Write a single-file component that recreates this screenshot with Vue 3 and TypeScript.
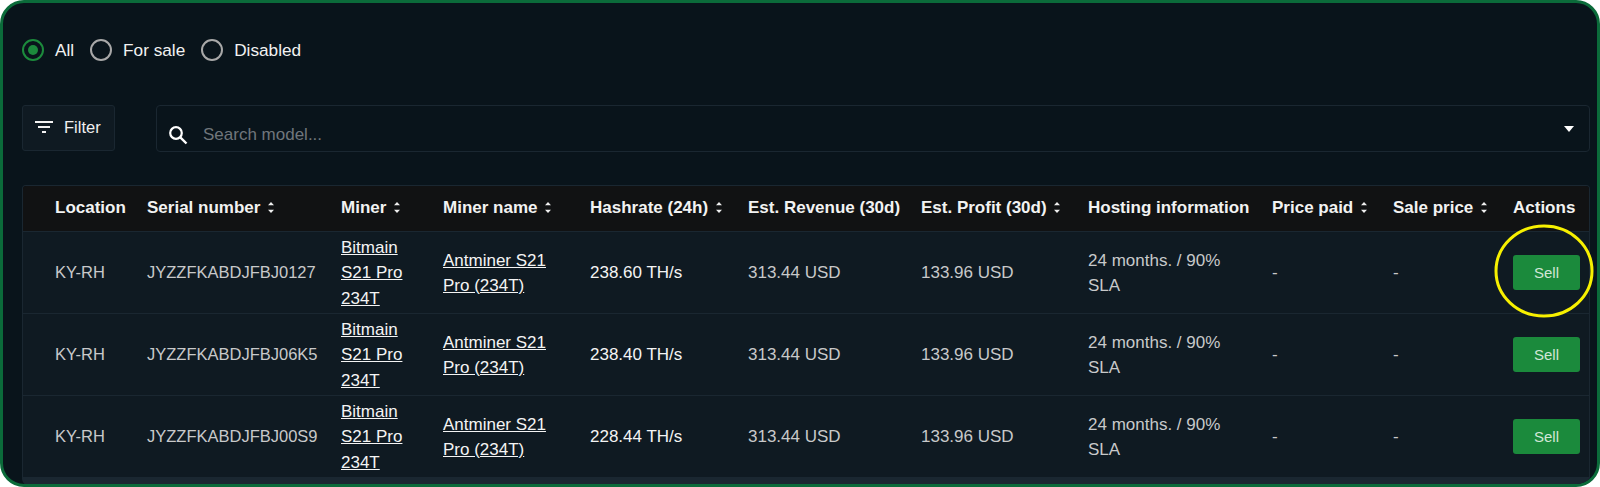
<script setup lang="ts">
interface Row { serial: string; hash: string }
const rows: Row[] = [
  { serial: 'JYZZFKABDJFBJ0127', hash: '238.60 TH/s' },
  { serial: 'JYZZFKABDJFBJ06K5', hash: '238.40 TH/s' },
  { serial: 'JYZZFKABDJFBJ00S9', hash: '228.44 TH/s' },
]
const columns = [
  { label: 'Location', sort: false, width: 124 },
  { label: 'Serial number', sort: true, width: 194 },
  { label: 'Miner', sort: true, width: 102 },
  { label: 'Miner name', sort: true, width: 147 },
  { label: 'Hashrate (24h)', sort: true, width: 158 },
  { label: 'Est. Revenue (30d)', sort: false, width: 173 },
  { label: 'Est. Profit (30d)', sort: true, width: 167 },
  { label: 'Hosting information', sort: false, width: 184 },
  { label: 'Price paid', sort: true, width: 121 },
  { label: 'Sale price', sort: true, width: 120 },
  { label: 'Actions', sort: false, width: 77 },
]
const filters = [
  { label: 'All', on: true },
  { label: 'For sale', on: false },
  { label: 'Disabled', on: false },
]
</script>

<template>
  <div class="frame">
    <div class="radios">
      <label v-for="f in filters" :key="f.label" class="radio">
        <span class="ring" :class="{ on: f.on }"><span v-if="f.on" class="dot"></span></span>
        <span>{{ f.label }}</span>
      </label>
    </div>
    <div class="tools">
      <button class="filter">
        <svg width="18" height="12" viewBox="0 0 18 12"><path d="M0 1h18M3 6h12M7 11h4" stroke="#f2f2f2" stroke-width="2" fill="none" /></svg>
        <span>Filter</span>
      </button>
      <div class="search">
        <svg width="20" height="20" viewBox="0 0 20 20"><circle cx="8" cy="8" r="5.8" stroke="#fff" stroke-width="2.2" fill="none" /><path d="M12.3 12.3L18.5 18.5" stroke="#fff" stroke-width="2.4" fill="none" /></svg>
        <span class="placeholder">Search model...</span>
        <svg class="caret" width="10" height="6" viewBox="0 0 10 6"><path d="M0 0h10L5 6z" fill="#fff" /></svg>
      </div>
    </div>
    <div class="table-wrap">
      <table>
        <colgroup><col v-for="c in columns" :key="c.label" :style="{ width: c.width + 'px' }" /></colgroup>
        <thead>
          <tr>
            <th v-for="c in columns" :key="c.label">
              {{ c.label }}
              <svg v-if="c.sort" class="sort" width="6" height="11" viewBox="0 0 6 11"><path d="M3 0L6 3.2H0zM3 11L0 7.8h6z" fill="#eee" /></svg>
            </th>
          </tr>
        </thead>
        <tbody>
          <tr v-for="r in rows" :key="r.serial">
            <td class="small">KY-RH</td>
            <td class="small">{{ r.serial }}</td>
            <td class="link"><a>Bitmain<br />S21 Pro<br />234T</a></td>
            <td class="link"><a>Antminer S21<br />Pro (234T)</a></td>
            <td class="hash">{{ r.hash }}</td>
            <td>313.44 USD</td>
            <td>133.96 USD</td>
            <td>24 months. / 90%<br />SLA</td>
            <td>-</td>
            <td>-</td>
            <td class="act"><button class="sell">Sell</button></td>
          </tr>
        </tbody>
      </table>
    </div>
    <svg class="highlight" width="102" height="96" viewBox="0 0 102 96"><ellipse cx="51" cy="48" rx="48" ry="45" fill="none" stroke="#f7f000" stroke-width="3" /></svg>
  </div>
</template>

<style>
html, body { margin: 0; background: #fff; }
</style>

<style scoped>
.frame {
  position: relative;
  box-sizing: border-box;
  width: 1600px;
  height: 487px;
  border: 3px solid #0b6b3a;
  border-radius: 24px;
  background: #09141b;
  padding: 36px 7px 0 19px;
  overflow: hidden;
  font-family: "Liberation Sans", Arial, sans-serif;
  font-size: 17px;
  color: #fff;
}
.radios { display: flex; gap: 16px; height: 22px; }
.radio { display: flex; align-items: center; gap: 11px; color: #f2f2f2; font-size: 17.2px; }
.ring {
  box-sizing: border-box;
  width: 22px;
  height: 22px;
  border: 2px solid #a8a8a8;
  border-radius: 50%;
  display: flex;
  align-items: center;
  justify-content: center;
}
.ring.on { border-color: #1c8a3c; }
.dot { width: 10px; height: 10px; border-radius: 50%; background: #1c8a3c; }
.tools { display: flex; gap: 41px; margin-top: 44px; align-items: flex-start; }
.filter {
  box-sizing: border-box;
  width: 93px;
  height: 46px;
  display: flex;
  align-items: center;
  gap: 11px;
  padding: 0 0 2px 12px;
  background: #0f1a22;
  border: 1px solid #1a2731;
  border-radius: 3px;
  color: #f0f0f0;
  font: 16.5px "Liberation Sans", Arial, sans-serif;
}
.search {
  flex: 1;
  box-sizing: border-box;
  height: 47px;
  display: flex;
  align-items: center;
  padding: 12px 15px 0 11px;
  border: 1px solid #1a2731;
  border-radius: 4px;
  position: relative;
}
.placeholder { margin-left: 15px; color: #70767b; font-size: 17px; }
.caret { margin-left: auto; margin-top: -12px; }
.table-wrap {
  margin-top: 33px;
  border: 1px solid #1a2731;
  border-bottom-width: 8px;
  border-radius: 4px 4px 6px 6px;
  overflow: hidden;
  width: 1568px;
  box-sizing: border-box;
}
table { border-collapse: collapse; table-layout: fixed; width: 1567px; }
th {
  height: 43px;
  padding: 0 0 2px 0;
  background: #111213;
  text-align: left;
  font-weight: 700;
  color: #f2f2f2;
  white-space: nowrap;
}
th:first-child, td:first-child { padding-left: 32px; }
.sort { margin-left: 3px; vertical-align: 0; }
td {
  height: 80px;
  padding: 1px 0 0;
  background: #0f1a22;
  border-top: 1px solid #1a2731;
  color: #c8c9ca;
  line-height: 25.5px;
}
td.small { font-size: 16.5px; }
td.act { height: 81px; padding: 0; }
.link a { color: #f4f4f4; text-decoration: underline; }
.hash { color: #f4f4f4; }
.sell {
  width: 67px;
  height: 35px;
  background: #1b8a3c;
  border: 0;
  border-radius: 3px;
  color: #d2e6d7;
  font: 15px "Liberation Sans", Arial, sans-serif;
}
.highlight { position: absolute; left: 1490px; top: 220px; }
</style>
